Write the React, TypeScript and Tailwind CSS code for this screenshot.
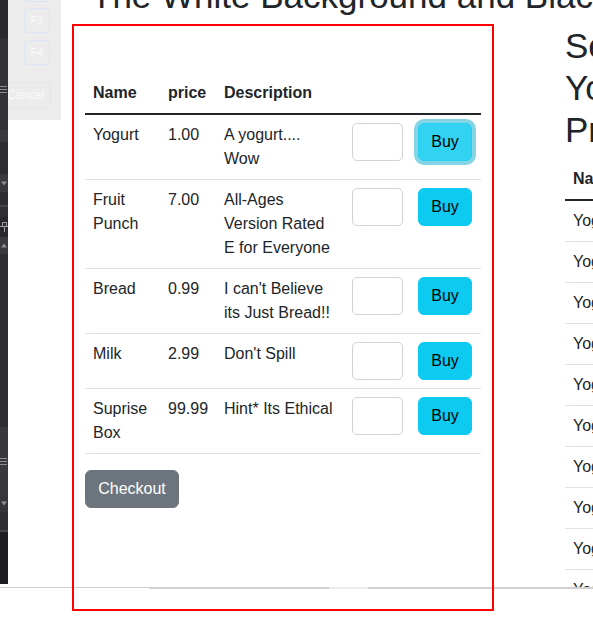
import React from "react";

const items = [
  { name: "Yogurt", price: "1.00", desc: "A yogurt.... Wow" },
  { name: "Fruit Punch", price: "7.00", desc: "All-Ages Version Rated E for Everyone" },
  { name: "Bread", price: "0.99", desc: "I can't Believe its Just Bread!!" },
  { name: "Milk", price: "2.99", desc: "Don't Spill" },
  { name: "Suprise Box", price: "99.99", desc: "Hint* Its Ethical" },
];

function TriDown() {
  return (
    <svg width="8" height="5" viewBox="0 0 8 5">
      <path d="M1 0.5 L7 0.5 L4 4.5 Z" fill="#8e8e92" />
    </svg>
  );
}
function TriUp() {
  return (
    <svg width="8" height="5" viewBox="0 0 8 5">
      <path d="M1 4.5 L7 4.5 L4 0.5 Z" fill="#8e8e92" />
    </svg>
  );
}
function Lines() {
  return (
    <svg width="8" height="7" viewBox="0 0 8 7">
      <path d="M0 0.5 H7 M0 3.5 H7 M0 6.5 H7" stroke="#8e8e92" strokeWidth="1" />
    </svg>
  );
}
function Pin() {
  return (
    <svg width="8" height="10" viewBox="0 0 8 10">
      <path d="M2.5 0.5 H6.5 V4.5 H2.5 Z M0 4.5 H8 M4.5 4.5 V10" stroke="#a0a0a4" strokeWidth="1" fill="none" />
    </svg>
  );
}

function Strip() {
  return (
    <div className="flex h-[584px] w-[8px] shrink-0 flex-col overflow-hidden">
      <div className="h-[38px] bg-[#2a2a2c]" />
      <div className="flex h-[92px] flex-col bg-[#333336] pt-[48px]">
        <Lines />
      </div>
      <div className="h-[12px] bg-[#3a3a3d]" />
      <div className="h-[32px] bg-[#2d2d30]" />
      <div className="flex h-[18px] items-center bg-[#3a3a3d]">
        <TriDown />
      </div>
      <div className="h-[13px] bg-[#2d2d30]" />
      <div className="h-[2px] bg-[#46464a]" />
      <div className="h-[10px] bg-[#303033]" />
      <div className="flex h-[20px] items-center bg-[#28282b]">
        <Pin />
      </div>
      <div className="flex h-[17px] items-center bg-[#3a3a3d]">
        <TriUp />
      </div>
      <div className="h-[173px] bg-[#2d2d30]" />
      <div className="flex h-[68px] items-center bg-[#39393c]">
        <Lines />
      </div>
      <div className="flex h-[17px] items-center bg-[#36363a]">
        <TriDown />
      </div>
      <div className="h-[18px] bg-[#2d2d30]" />
      <div className="h-[2px] bg-[#46464a]" />
      <div className="flex-1 bg-[#1e1e20]" />
    </div>
  );
}

function Panel() {
  return (
    <div className="absolute left-0 top-0 h-[120px] w-[53px] overflow-visible bg-[#ececec] text-[11px] text-[#fafafa]">
      <div className="absolute left-[16px] top-[-23px] h-[25px] w-[26px] rounded-[4px] border border-[#d8e5f4]" />
      <div className="absolute left-[16px] top-[8px] flex h-[25px] w-[26px] items-center justify-center rounded-[4px] border border-[#dbe7f5]">
        F3
      </div>
      <div className="absolute left-[16px] top-[40px] flex h-[25px] w-[26px] items-center justify-center rounded-[4px] border border-[#dbe7f5]">
        F4
      </div>
      <div className="absolute left-[-8px] top-[82px] flex h-[26px] w-[51px] items-center justify-center rounded-[4px] border border-[#e6e6e6] text-[12px]">
        Cancel
      </div>
    </div>
  );
}

export default function App() {
  return (
    <div className="relative h-[636px] w-[593px] overflow-hidden bg-white font-['Liberation_Sans',Arial,sans-serif] text-[#212529]">
      <div className="flex h-[587px] bg-white">
        <Strip />
        <div className="relative flex-1 overflow-hidden">
          <h1 className="ml-[83px] mt-[-25px] whitespace-nowrap text-[35px] font-normal leading-[42px]">
            The White Background and Black Text
          </h1>
          <div className="mt-[7px] flex items-start">
            <div className="ml-[77px] w-[396px] shrink-0 pt-[49px]">
              <table className="mb-4 w-[396px] table-fixed border-collapse text-[16px] leading-6">
                <colgroup>
                  <col className="w-[75px]" />
                  <col className="w-[56px]" />
                  <col className="w-[128px]" />
                  <col className="w-[66px]" />
                  <col className="w-[71px]" />
                </colgroup>
                <thead>
                  <tr>
                    <th className="border-b-2 border-[#212529] p-2 text-left font-bold">Name</th>
                    <th className="border-b-2 border-[#212529] p-2 text-left font-bold">price</th>
                    <th className="border-b-2 border-[#212529] p-2 text-left font-bold whitespace-nowrap">Description</th>
                    <th className="border-b-2 border-[#212529] p-2" />
                    <th className="border-b-2 border-[#212529] p-2" />
                  </tr>
                </thead>
                <tbody>
                  {items.map((it, i) => (
                    <tr key={it.name}>
                      <td className="border-b border-[#dee2e6] p-2 align-top">{it.name}</td>
                      <td className="border-b border-[#dee2e6] p-2 align-top whitespace-nowrap">{it.price}</td>
                      <td className="border-b border-[#dee2e6] p-2 align-top">{it.desc}</td>
                      <td className="border-b border-[#dee2e6] p-2 align-top">
                        <input
                          type="text"
                          className="block h-[38px] w-[51px] rounded-[5px] border border-[#ced4da] bg-white outline-none"
                        />
                      </td>
                      <td className="border-b border-[#dee2e6] p-2 align-top">
                        <button
                          className={
                            i === 0
                              ? "block h-[38px] w-[54px] rounded-[6px] border border-[#25cff2] bg-[#31d2f2] text-center text-[16px] leading-6 text-black shadow-[0_0_0_4px_rgba(11,172,204,0.5)]"
                              : "block h-[38px] w-[54px] rounded-[6px] border border-[#0dcaf0] bg-[#0dcaf0] text-center text-[16px] leading-6 text-black"
                          }
                        >
                          Buy
                        </button>
                      </td>
                    </tr>
                  ))}
                </tbody>
              </table>
              <button className="h-[38px] w-[94px] rounded-[6px] border border-[#6c757d] bg-[#6c757d] text-[16px] leading-6 text-white">
                Checkout
              </button>
            </div>
            <div className="ml-[84px] w-[160px] shrink-0 pt-[1px]">
              <h2 className="mb-[8px] text-[35px] font-normal leading-[42px]">Select Your Products</h2>
              <table className="w-[300px] border-collapse text-[16px] leading-6">
                <thead>
                  <tr>
                    <th className="border-b-2 border-[#212529] p-2 text-left font-bold">Name</th>
                    <th className="border-b-2 border-[#212529] p-2 text-left font-bold">price</th>
                    <th className="border-b-2 border-[#212529] p-2 text-left font-bold">Quantity</th>
                  </tr>
                </thead>
                <tbody>
                  {Array.from({ length: 10 }).map((_, i) => (
                    <tr key={i}>
                      <td className="border-b border-[#dee2e6] p-2">Yogurt</td>
                      <td className="border-b border-[#dee2e6] p-2">1.00</td>
                      <td className="border-b border-[#dee2e6] p-2">1</td>
                    </tr>
                  ))}
                </tbody>
              </table>
            </div>
          </div>
          <Panel />
        </div>
      </div>
      <div className="flex h-[2px] items-start">
        <div className="h-px w-[149px] bg-[#cfcfcf]" />
        <div className="h-[2px] w-[180px] bg-[#d0d0d0]" />
        <div className="h-[2px] w-[39px] bg-[#ececec]" />
        <div className="h-[2px] flex-1 bg-[#d0d0d0]" />
      </div>
      <div className="pointer-events-none absolute left-[72px] top-[24px] h-[587px] w-[422px] border-2 border-[#ff0000]" />
    </div>
  );
}
